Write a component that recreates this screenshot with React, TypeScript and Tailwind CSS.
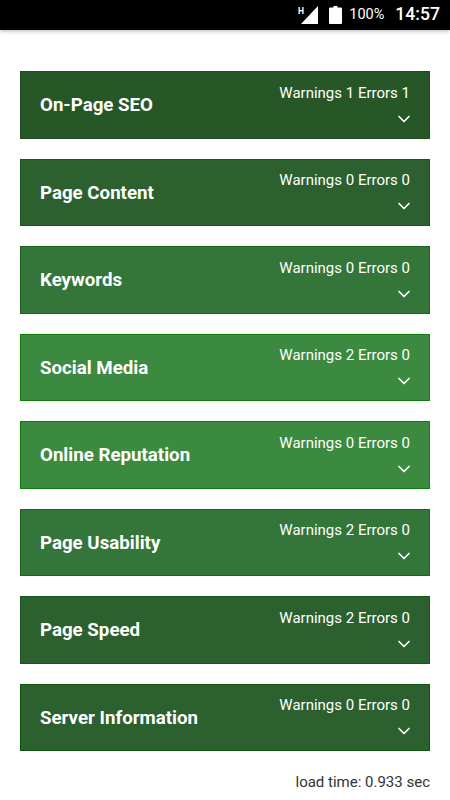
import { ChevronDown } from "lucide-react";

const sections = [
  { title: "On-Page SEO", warnings: 1, errors: 1, color: "bg-[#275727]", border: "border-[#1c4d1c]" },
  { title: "Page Content", warnings: 0, errors: 0, color: "bg-[#2c612f]", border: "border-[#1c551c]" },
  { title: "Keywords", warnings: 0, errors: 0, color: "bg-[#347539]", border: "border-[#1c661c]" },
  { title: "Social Media", warnings: 2, errors: 0, color: "bg-[#3c8a40]", border: "border-[#0d800d]" },
  { title: "Online Reputation", warnings: 0, errors: 0, color: "bg-[#3c8a40]", border: "border-[#0d800d]" },
  { title: "Page Usability", warnings: 2, errors: 0, color: "bg-[#347539]", border: "border-[#1c661c]" },
  { title: "Page Speed", warnings: 2, errors: 0, color: "bg-[#2c612f]", border: "border-[#1c551c]" },
  { title: "Server Information", warnings: 0, errors: 0, color: "bg-[#2c612f]", border: "border-[#0d550d]" },
];

function StatusBar() {
  return (
    <div className="flex h-[30px] items-center justify-end bg-black pr-[10px] text-white shadow-[0_1px_4px_rgba(0,0,0,0.3)]">
      <svg width="21" height="18" viewBox="0 0 21 18" className="mr-[10px]" fill="white">
        <polygon points="20,0 20,18 3,18" />
        <text x="0" y="8" fontSize="8.500" fontWeight="700" fontFamily="Roboto, sans-serif">H</text>
      </svg>
      <svg width="13" height="18" viewBox="0 0 13 18" className="mr-[7px]" fill="white">
        <path d="M4.500 0h4v1.500h3.500a1 1 0 0 1 1 1V17a1 1 0 0 1-1 1H1a1 1 0 0 1-1-1V2.500a1 1 0 0 1 1-1h3.500z" />
      </svg>
      <span className="mr-[11px] text-[14.500px] leading-none">100%</span>
      <span className="text-[17.600px] leading-none font-medium">14:57</span>
    </div>
  );
}

export default function App() {
  return (
    <div className="h-[800px] overflow-hidden bg-white font-['Roboto',sans-serif]">
      <StatusBar />
      <div className="flex flex-col gap-5 px-5 pt-[41px]">
        {sections.map((s) => (
          <div
            key={s.title}
            className={`flex h-[67.5px] items-center justify-between border pr-[19px] pl-[19px] text-white ${s.color} ${s.border}`}
          >
            <span className="pt-px text-[18.700px] font-bold">{s.title}</span>
            <div className="flex flex-col items-end pt-[2px]">
              <span className="text-[15px] leading-[20px]">
                Warnings {s.warnings} Errors {s.errors}
              </span>
              <ChevronDown className="mt-[6px] mr-[-4px] h-5 w-5" strokeWidth={2} />
            </div>
          </div>
        ))}
      </div>
      <p className="mt-[21px] pr-5 text-right text-[15px] leading-5 text-[#333]">load time: 0.933 sec</p>
    </div>
  );
}
